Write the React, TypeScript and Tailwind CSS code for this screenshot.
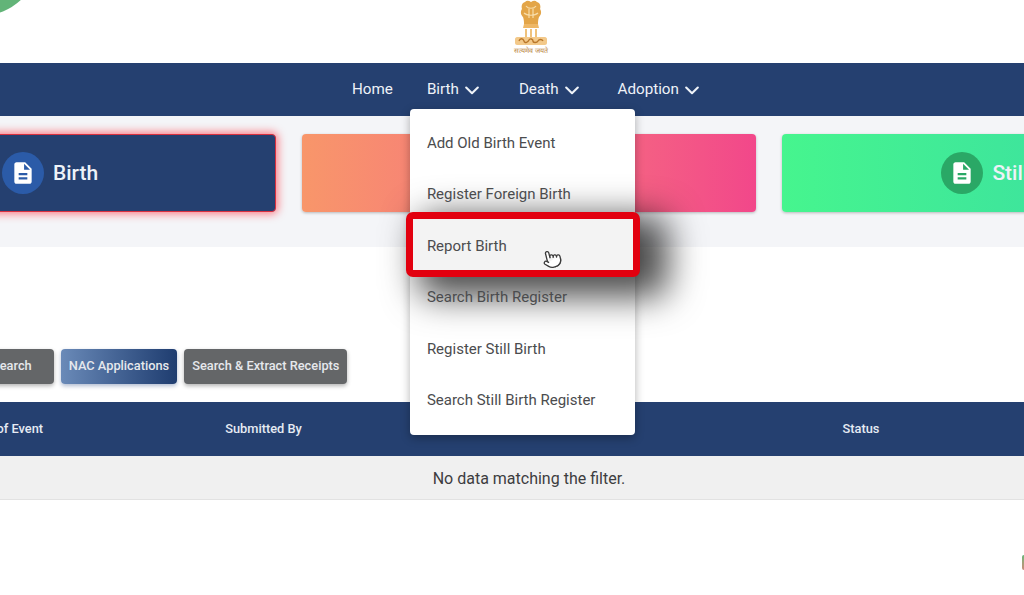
import { MdDescription } from "react-icons/md";
import { Pointer } from "lucide-react";

const birthMenu = [
  "Add Old Birth Event",
  "Register Foreign Birth",
  "Report Birth",
  "Search Birth Register",
  "Register Still Birth",
  "Search Still Birth Register",
];

function Chevron() {
  return (
    <svg width="14" height="9" viewBox="0 0 14 9" fill="none" className="mt-[2px]">
      <path d="M1.2 1.5 7 7.2l5.8-5.7" stroke="#eef2f8" strokeWidth="2.1" strokeLinecap="round" strokeLinejoin="round" />
    </svg>
  );
}

function Emblem() {
  return (
    <svg width="38" height="46" viewBox="0 0 38 46" fill="none">
      <path d="M13 2c2-2 4-1 6 0 2-1 4-2 6 0 3 1 4 4 3 7 2 3 1 6-1 8-1 3-1 5-1 7H12c0-2 0-4-1-7-2-2-3-5-1-8-1-3 0-6 3-7z" fill="#e3a548" />
      <path d="M14 6c2 3 8 3 10 0M12 13c3 3 11 3 14 0M17 8v10M21 8v10" stroke="#f7dca8" strokeWidth="1.2" />
      <path d="M12 24h14l1 4H11z" fill="#eeb765" />
      <path d="M13 29h2v8h-2zM18 29h2v8h-2zM23 29h2v8h-2z" fill="#efc27c" />
      <path d="M5 37h28c1 0 2 1 2 2v4c0 1-1 2-2 2H5c-1 0-2-1-2-2v-4c0-1 1-2 2-2z" fill="#f3c98a" />
      <path d="M7 41c1-3 4-3 5 0s4 1 5-1 4-1 4 1 4 2 5 0 4-2 5 0" stroke="#b9772a" strokeWidth="1.4" />
    </svg>
  );
}

function NavItem({ label }: { label: string }) {
  return (
    <div className="flex items-center gap-[6px]">
      <span>{label}</span>
      <Chevron />
    </div>
  );
}

function EventCard({ label, className, iconClass }: { label: string; className: string; iconClass: string }) {
  return (
    <div className={`flex h-[78px] w-[454px] shrink-0 items-center justify-center gap-[9px] rounded-[4px] pl-[2px] ${className}`}>
      <div className={`flex h-[42px] w-[42px] items-center justify-center rounded-full ${iconClass}`}>
        <MdDescription size={26} color="#ffffff" />
      </div>
      <span className="pt-[1px] text-[21px] font-medium text-[#edf2f8]">{label}</span>
    </div>
  );
}

export default function App() {
  return (
    <div className="relative h-[595px] w-[1024px] overflow-hidden bg-white font-['Roboto',sans-serif]">
      {/* corners of the page that are cut by the frame */}
      <div className="absolute left-[-80px] top-[-104px] h-[120px] w-[120px] rounded-full bg-[#62b478]" />
      <div className="absolute left-[1022px] top-[555px] h-[15px] w-[4px] rounded-full bg-gradient-to-b from-[#62b478] to-[#c98a7a]" />

      <header className="flex h-[63px] flex-col items-center pl-[38px]">
        <Emblem />
        <span className="mt-[1px] text-[7px] leading-[9px] text-[#b8843c]">सत्यमेव जयते</span>
      </header>

      <nav className="relative z-20 flex h-[53px] items-center bg-[#254070] pl-[352px] text-[15.2px] text-[#eef2f8]">
        <span>Home</span>
        <div className="relative ml-[34px] flex h-full items-center">
          <NavItem label="Birth" />
          <div className="absolute left-[-17px] top-[46px] w-[225px] rounded-[4px] bg-white pb-[9px] pt-[8px] shadow-[0_3px_10px_rgba(0,0,0,0.3)]">
            {birthMenu.map((item) => (
              <div key={item} className="relative flex h-[51.5px] items-center pl-[17px] text-[15px] text-[#4b4c4e]">
                {item === "Report Birth" && (
                  <div className="absolute left-[-4px] right-[-5px] top-[-8px] h-[65px] rounded-[7px] border-[7px] border-[#e2000f] bg-[#f3f3f3] shadow-[20px_12px_35px_8px_rgba(0,0,0,0.7)]">
                    <Pointer size={20} fill="#ffffff" color="#3b3b3b" strokeWidth={1.6} className="absolute left-[129px] top-[30px] rotate-[-14deg]" />
                  </div>
                )}
                <span className="relative z-10">{item}</span>
              </div>
            ))}
          </div>
        </div>
        <div className="ml-[40px]">
          <NavItem label="Death" />
        </div>
        <div className="ml-[39px]">
          <NavItem label="Adoption" />
        </div>
      </nav>

      <section className="h-[131px] bg-[#f4f5f8] pt-[18px]">
        <div className="ml-[-178px] flex gap-[26px]">
          <EventCard
            label="Birth"
            className="border border-[#d9303f] bg-[#254070] shadow-[0_0_8px_2px_rgba(255,60,70,0.65)]"
            iconClass="bg-[#2b5ba8]"
          />
          <EventCard
            label="Death"
            className="bg-gradient-to-r from-[#f8966a] to-[#f2478a] shadow-[0_1px_3px_rgba(0,0,0,0.25)]"
            iconClass="bg-[#d9607a]"
          />
          <EventCard
            label="Still Birth"
            className="bg-gradient-to-r from-[#46f58e] to-[#38d8a5] shadow-[0_1px_3px_rgba(0,0,0,0.25)]"
            iconClass="bg-[#2aa866]"
          />
        </div>
      </section>

      <div className="ml-[-29px] mt-[102px] flex gap-[7px] text-[12.8px] font-medium text-[#e6e8ec]">
        <button className="h-[35px] rounded-[4px] bg-[#646668] pb-[1px] pl-[21px] pr-[22px] shadow-[0_2px_4px_rgba(0,0,0,0.3)]">Search</button>
        <button className="h-[35px] rounded-[4px] bg-gradient-to-r from-[#6a8ab8] to-[#1f3d70] px-[8px] pb-[1px] shadow-[0_2px_4px_rgba(30,60,120,0.35)]">
          NAC Applications
        </button>
        <button className="h-[35px] rounded-[4px] bg-[#646668] px-[8px] pb-[1px] shadow-[0_2px_4px_rgba(0,0,0,0.3)]">Search &amp; Extract Receipts</button>
      </div>

      <div className="mt-[18px]">
        <div className="ml-[-100px] grid h-[54px] w-[1124px] grid-cols-[210px_307px_210px_468px] items-center bg-[#254070] text-center text-[12.8px] font-medium text-[#e6ebf3]">
          <span>Date of Event</span>
          <span>Submitted By</span>
          <span />
          <span>Status</span>
        </div>
        <div className="flex h-[44px] items-center justify-center border-b border-[#e2e2e2] bg-[#f0f0f0] pl-[34px] pt-[2px] text-[16px] text-[#3d3d3f]">
          No data matching the filter.
        </div>
      </div>
    </div>
  );
}
